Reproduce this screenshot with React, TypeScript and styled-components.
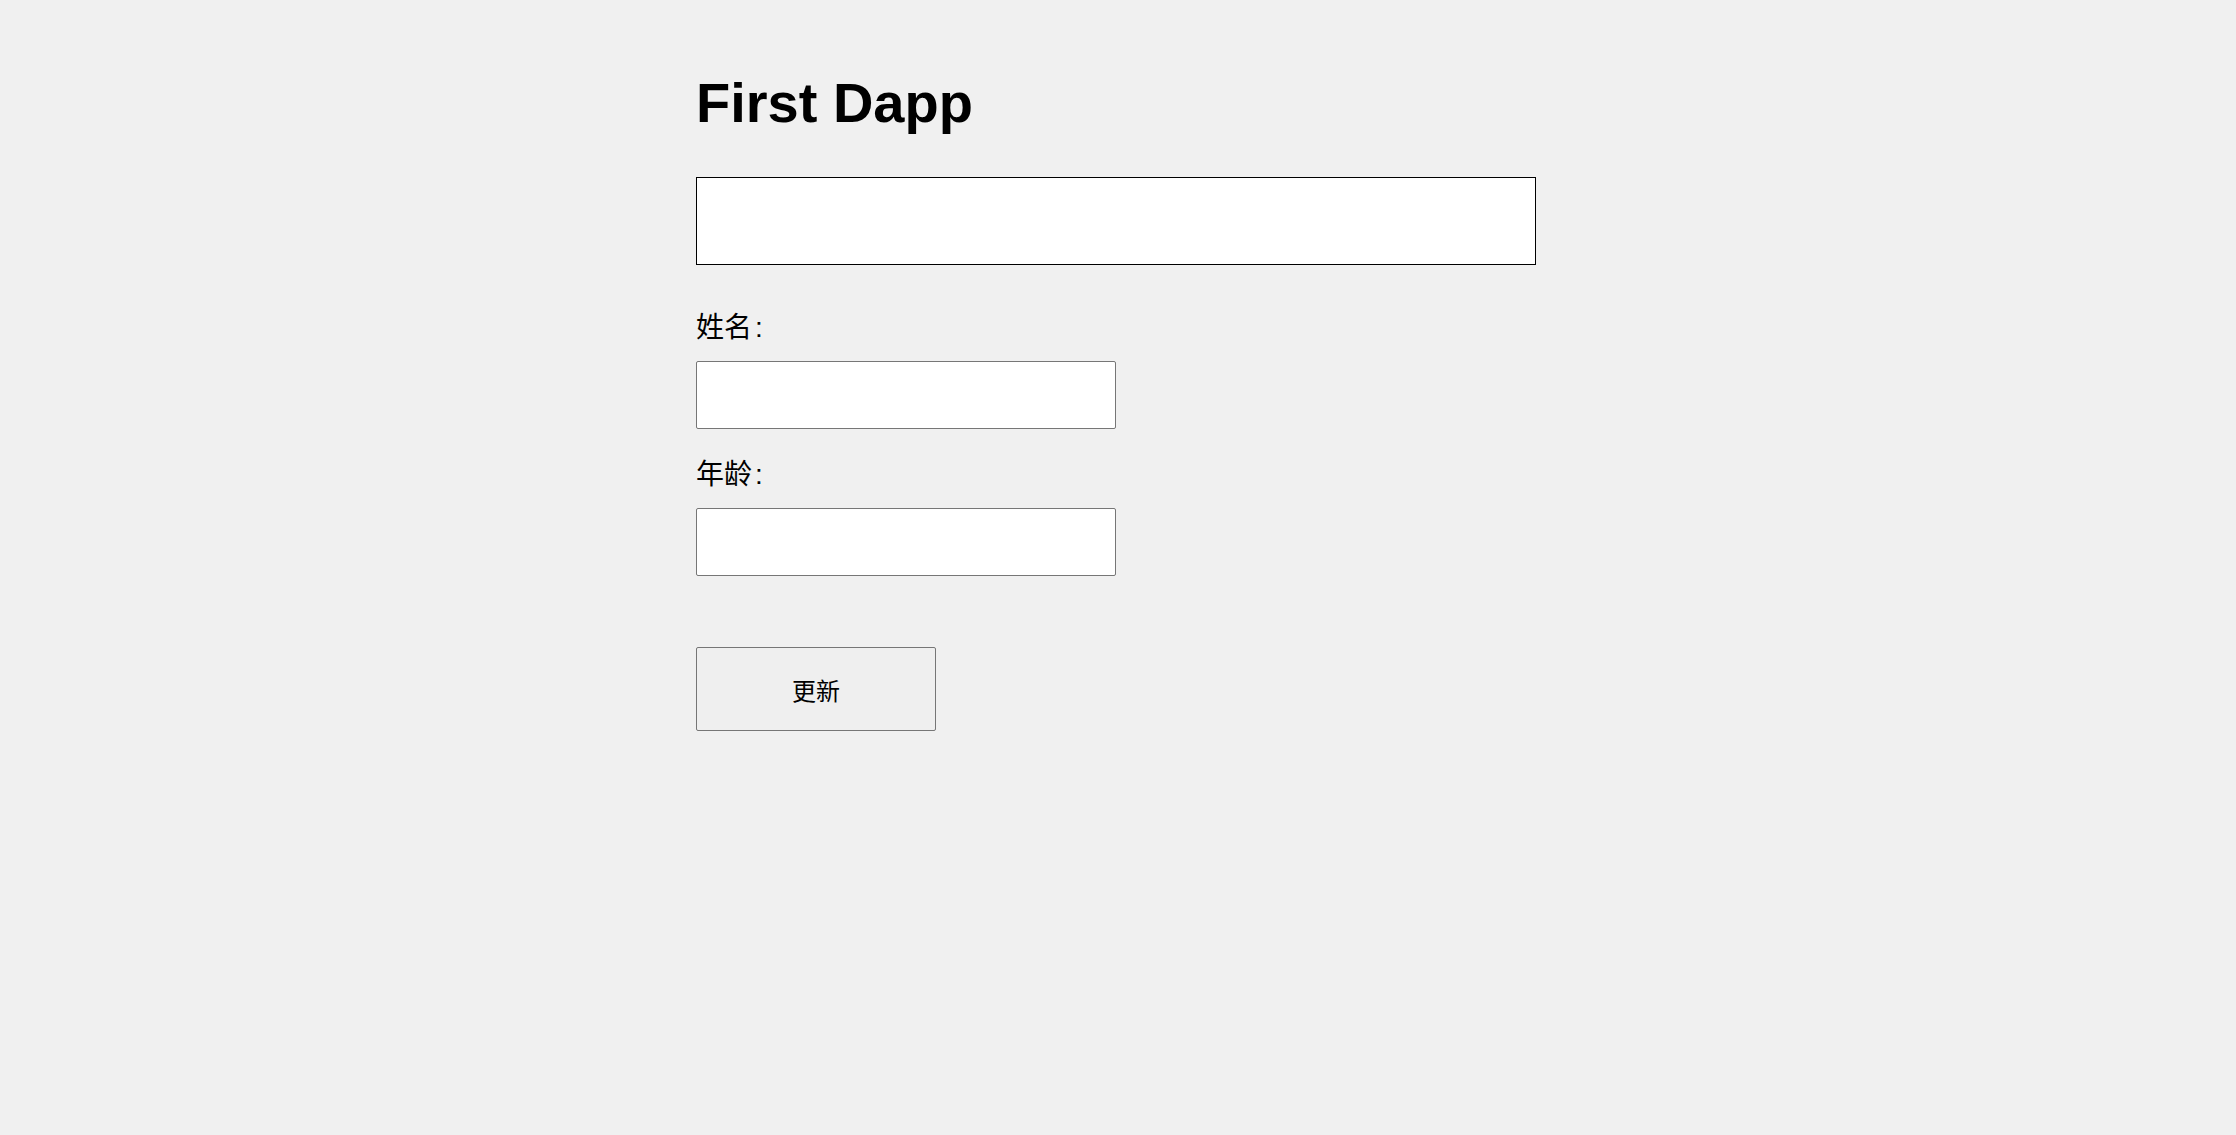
import React from "react";
import styled, { createGlobalStyle } from "styled-components";

const GlobalStyle = createGlobalStyle`
  html, body {
    margin: 0;
    padding: 0;
    background: #f0f0f0;
  }
  body {
    font-family: "Liberation Sans", Arial, "Noto Sans CJK SC", sans-serif;
    color: #000;
  }
`;

const Page = styled.main`
  width: 844px;
  margin: 0 auto;
  padding-top: 71px;
  display: flex;
  flex-direction: column;
  align-items: flex-start;
`;

const Title = styled.h1`
  margin: 0;
  font-family: "Liberation Sans", Arial, sans-serif;
  font-size: 56px;
  line-height: 64px;
  font-weight: 700;
`;

const OutputBox = styled.div`
  box-sizing: border-box;
  width: 840px;
  height: 88px;
  margin-top: 42px;
  background: #fff;
  border: 1px solid #000;
`;

const Form = styled.form`
  display: flex;
  flex-direction: column;
  align-items: flex-start;
  margin-top: 47px;
`;

const Label = styled.label<{ $first?: boolean }>`
  display: block;
  margin-top: ${(p) => (p.$first ? "0" : "30px")};
  font-family: "Liberation Sans", Arial, "Noto Sans CJK SC", sans-serif;
  font-size: 28px;
  line-height: 32px;
`;

const Colon = styled.span`
  margin-left: 3px;
`;

const TextInput = styled.input`
  box-sizing: border-box;
  width: 420px;
  height: 68px;
  margin-top: 17px;
  padding: 0 8px;
  background: #fff;
  border: 1px solid #767676;
  border-radius: 2px;
  font-size: 24px;
  outline: none;
`;

const SubmitButton = styled.button`
  box-sizing: border-box;
  width: 240px;
  height: 84px;
  margin-top: 71px;
  background: #efefef;
  border: 1px solid #767676;
  border-radius: 2px;
  font-family: "Liberation Sans", Arial, "Noto Sans CJK SC", sans-serif;
  font-size: 24px;
  color: #000;
  cursor: pointer;
`;

export default function App() {
  return (
    <>
      <GlobalStyle />
      <Page>
        <Title>First Dapp</Title>
        <OutputBox />
        <Form onSubmit={(e) => e.preventDefault()}>
          <Label $first htmlFor="name">
            姓名<Colon>:</Colon>
          </Label>
          <TextInput id="name" type="text" />
          <Label htmlFor="age">
            年龄<Colon>:</Colon>
          </Label>
          <TextInput id="age" type="text" />
          <SubmitButton type="submit">更新</SubmitButton>
        </Form>
      </Page>
    </>
  );
}
